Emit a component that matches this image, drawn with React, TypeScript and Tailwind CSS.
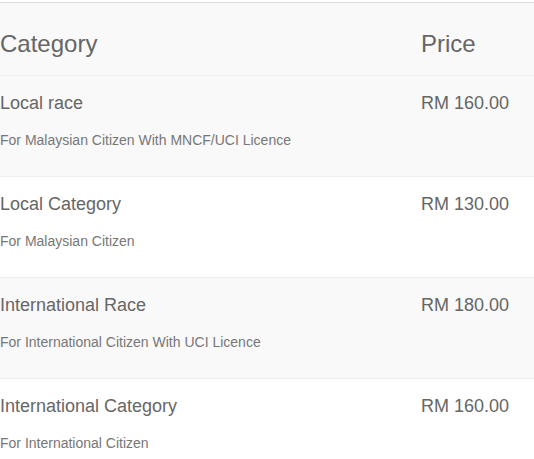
const rows = [
  { name: "Local race", note: "For Malaysian Citizen With MNCF/UCI Licence", price: "RM 160.00" },
  { name: "Local Category", note: "For Malaysian Citizen", price: "RM 130.00" },
  { name: "International Race", note: "For International Citizen With UCI Licence", price: "RM 180.00" },
  { name: "International Category", note: "For International Citizen", price: "RM 160.00" },
];

export default function App() {
  return (
    <div className="min-h-screen bg-white font-['Liberation_Sans',Arial,sans-serif] text-[#666]">
      <div className="mt-[2px] border-t border-[#ddd]">
        <div className="flex bg-[#f9f9f9] border-b border-[#eee] pt-[24px] pb-[14px]">
          <div className="w-[421px] text-[24px] leading-[34px]">Category</div>
          <div className="flex-1 text-[24px] leading-[34px]">Price</div>
        </div>
        {rows.map((r, i) => (
          <div
            key={r.name}
            className={`flex border-b border-[#eee] pt-[14px] pb-[26px] ${i % 2 === 0 ? "bg-[#f9f9f9]" : "bg-white"}`}
          >
            <div className="w-[421px]">
              <div className="text-[18px] leading-[26px]">{r.name}</div>
              <div className="mt-[14px] text-[14px] leading-[20px] text-[#777]">{r.note}</div>
            </div>
            <div className="flex-1 text-[18px] leading-[26px]">{r.price}</div>
          </div>
        ))}
      </div>
    </div>
  );
}
